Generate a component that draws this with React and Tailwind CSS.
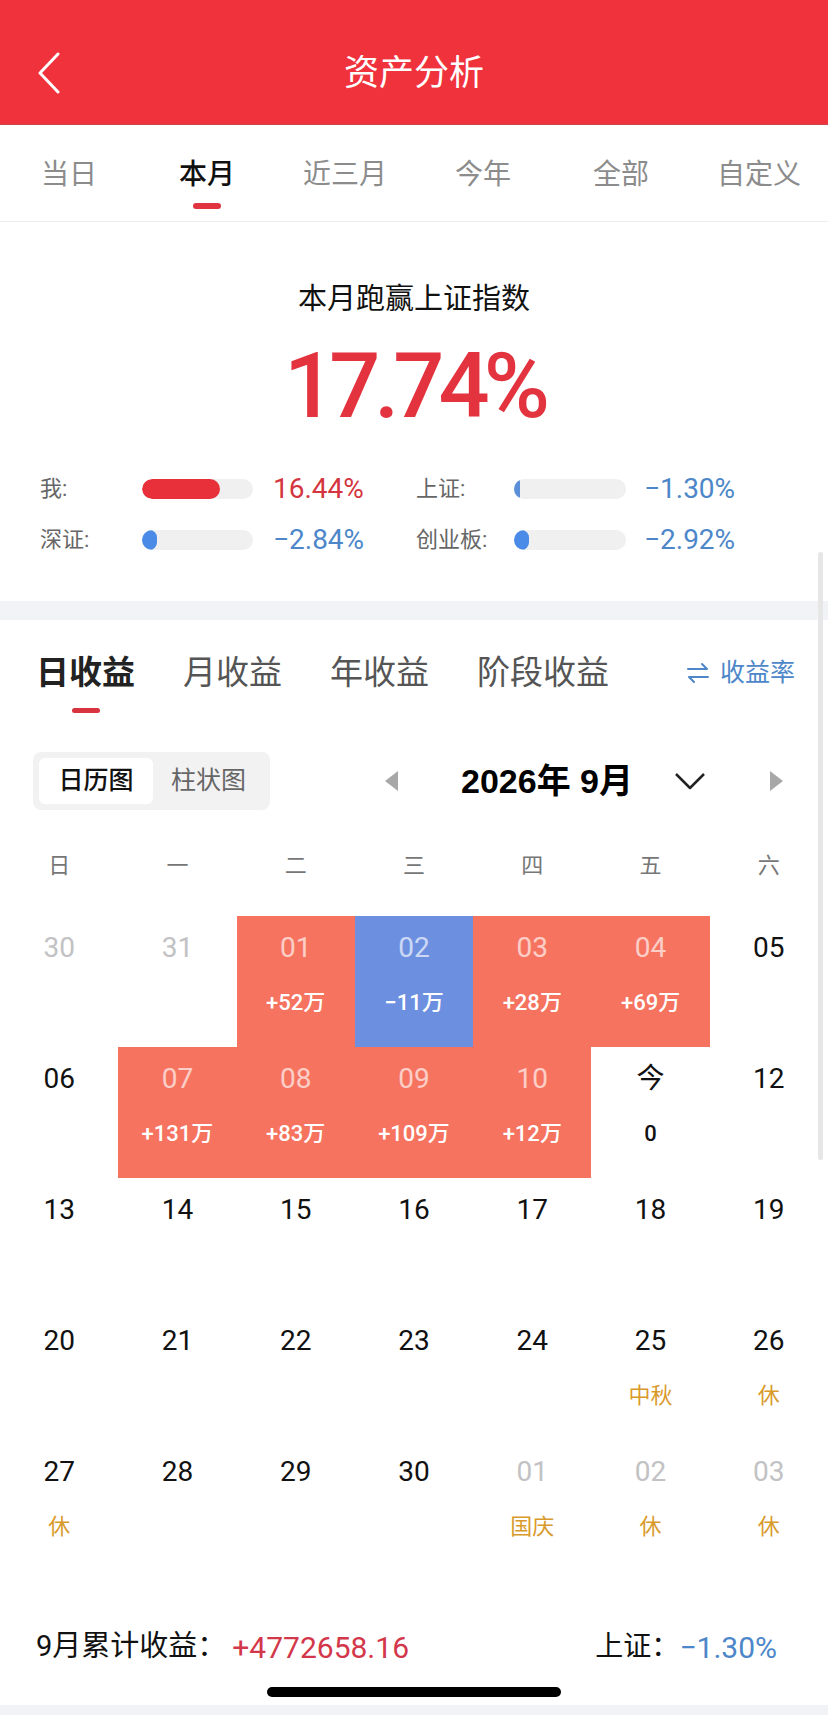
import React from 'react';

const periodTabs = ['当日', '本月', '近三月', '今年', '全部', '自定义'];
const incomeTabs = ['日收益', '月收益', '年收益', '阶段收益'];
const weekDays = ['日', '一', '二', '三', '四', '五', '六'];

const stats = [
  [
    { label: '我:', fill: 'w-[78px] bg-[#e8303a]', value: '16.44%', color: 'text-[#d5353f]' },
    { label: '上证:', fill: 'w-[6px] bg-[#5b8fd8]', value: '−1.30%', color: 'text-[#4d87c9]' },
  ],
  [
    { label: '深证:', fill: 'w-[15px] bg-[#4a8be8]', value: '−2.84%', color: 'text-[#4d87c9]' },
    { label: '创业板:', fill: 'w-[15px] bg-[#4a8be8]', value: '−2.92%', color: 'text-[#4d87c9]' },
  ],
];

const weeks = [
  [
    { d: '30', muted: true },
    { d: '31', muted: true },
    { d: '01', v: '+52万', kind: 'up' },
    { d: '02', v: '−11万', kind: 'down' },
    { d: '03', v: '+28万', kind: 'up' },
    { d: '04', v: '+69万', kind: 'up' },
    { d: '05' },
  ],
  [
    { d: '06' },
    { d: '07', v: '+131万', kind: 'up' },
    { d: '08', v: '+83万', kind: 'up' },
    { d: '09', v: '+109万', kind: 'up' },
    { d: '10', v: '+12万', kind: 'up' },
    { d: '今', v: '0' },
    { d: '12' },
  ],
  [{ d: '13' }, { d: '14' }, { d: '15' }, { d: '16' }, { d: '17' }, { d: '18' }, { d: '19' }],
  [
    { d: '20' },
    { d: '21' },
    { d: '22' },
    { d: '23' },
    { d: '24' },
    { d: '25', note: '中秋' },
    { d: '26', note: '休' },
  ],
  [
    { d: '27', note: '休' },
    { d: '28' },
    { d: '29' },
    { d: '30' },
    { d: '01', muted: true, note: '国庆' },
    { d: '02', muted: true, note: '休' },
    { d: '03', muted: true, note: '休' },
  ],
];

const StatItem = ({ item, labelW, barW, gap }) => (
  <div className="flex items-center">
    <div className={`${labelW} text-[22px] leading-[36px] text-[#666]`}>{item.label}</div>
    <div className={`${barW} h-[20px] rounded-full bg-[#f0f0f0] overflow-hidden`}>
      <div className={`h-full rounded-full ${item.fill}`} />
    </div>
    <div className={`${gap} text-[28px] leading-[36px] ${item.color}`}>{item.value}</div>
  </div>
);

const DayCell = ({ day }) => {
  let bg = '';
  let numColor = day.muted ? 'text-[#c2c2c4]' : 'text-[#111]';
  let subColor = 'text-[#111]';
  if (day.kind === 'up') {
    bg = 'bg-[#f5735f]';
    numColor = 'text-white/65';
    subColor = 'text-white';
  }
  if (day.kind === 'down') {
    bg = 'bg-[#6c8fe0]';
    numColor = 'text-white/65';
    subColor = 'text-white';
  }
  return (
    <div className={`h-[131px] flex flex-col items-center ${bg}`}>
      <div className={`pt-[14px] text-[28px] leading-[36px] ${numColor}`}>{day.d}</div>
      {day.v && (
        <div className={`mt-[23px] text-[22px] leading-[28px] font-medium ${subColor}`}>{day.v}</div>
      )}
      {day.note && (
        <div className="mt-[23px] text-[22px] leading-[28px] text-[#d99a2c]">{day.note}</div>
      )}
    </div>
  );
};

const App = () => {
  return (
    <div className="relative w-[828px] h-[1716px] bg-white overflow-hidden font-['Roboto','Noto_Sans_CJK_SC',sans-serif]">
      {/* header */}
      <div className="h-[124px] bg-[#f0323d] shadow-[0_1px_0_#c9474c] relative flex items-center justify-center pt-[16px]">
        <svg className="absolute left-[36px] top-[52px]" width="26" height="42" viewBox="0 0 26 42">
          <polyline points="22,2 4,21 22,40" fill="none" stroke="#fff" strokeWidth="3" strokeLinecap="round" strokeLinejoin="round" />
        </svg>
        <div className="text-[35px] text-white font-['Noto_Sans_CJK_SC',sans-serif]">资产分析</div>
      </div>

      {/* period tabs */}
      <div className="h-[98px] grid grid-cols-6 border-b border-[#ededed]">
        {periodTabs.map((t, i) => (
          <div key={t} className="flex flex-col items-center pt-[34px]">
            <div className={`text-[28px] leading-[34px] ${i === 1 ? 'text-[#111] font-medium' : 'text-[#8c8c8c]'}`}>{t}</div>
            {i === 1 && <div className="mt-[11px] w-[28px] h-[6px] rounded-full bg-[#e0343f]" />}
          </div>
        ))}
      </div>

      {/* summary */}
      <div className="h-[379px] flex flex-col">
        <div className="pt-[60px] text-center text-[29px] leading-[34px] text-[#111]">本月跑赢上证指数</div>
        <div className="mt-[21px] text-center text-[90px] leading-[100px] font-medium tracking-[-6px] text-[#e2333e]">17.74%</div>
        <div className="mt-[34px] px-[40px] flex flex-col gap-[15px]">
          {stats.map((row, i) => (
            <div key={i} className="flex">
              <div className="w-[376px]">
                <StatItem item={row[0]} labelW="w-[102px]" barW="w-[111px]" gap="ml-[20px]" />
              </div>
              <StatItem item={row[1]} labelW="w-[98px]" barW="w-[112px]" gap="ml-[18px]" />
            </div>
          ))}
        </div>
      </div>

      <div className="h-[19px] bg-[#f2f3f7]" />

      {/* income tabs */}
      <div className="flex items-start pl-[36px] pr-[33px] pt-[33px]">
        <div className="flex gap-[48px]">
          {incomeTabs.map((t, i) => (
            <div key={t} className="flex flex-col items-center">
              <div className={`text-[33px] leading-[40px] ${i === 0 ? 'text-[#222] font-bold' : 'text-[#555]'}`}>{t}</div>
              {i === 0 && <div className="mt-[15px] w-[28px] h-[5px] rounded-full bg-[#d93340]" />}
            </div>
          ))}
        </div>
        <div className="ml-auto flex items-center h-[40px] gap-[10px] text-[25px] text-[#4d87c9]">
          <svg width="24" height="22" viewBox="0 0 24 22">
            <path d="M2 7 H21 L16 2 M22 15 H3 L8 20" fill="none" stroke="#4d87c9" strokeWidth="2" strokeLinecap="round" strokeLinejoin="round" />
          </svg>
          <span>收益率</span>
        </div>
      </div>

      {/* toggle + month nav */}
      <div className="mt-[39px] flex items-center">
        <div className="ml-[33px] w-[237px] h-[58px] rounded-[8px] bg-[#f2f2f2] p-[6px] flex items-center">
          <div className="w-[114px] h-full rounded-[6px] bg-white flex items-center justify-center text-[25px] font-medium text-[#111]">日历图</div>
          <div className="flex-1 flex items-center justify-center text-[25px] text-[#666]">柱状图</div>
        </div>
        <svg className="ml-[113px]" width="16" height="22" viewBox="0 0 16 22">
          <polygon points="15,1 15,21 2,11" fill="#a8a8a8" />
        </svg>
        <div className="ml-[62px] text-[34px] font-bold text-black font-['Liberation_Sans','Noto_Sans_CJK_SC',sans-serif]">2026年 9月</div>
        <svg className="ml-[40px]" width="34" height="20" viewBox="0 0 34 20">
          <polyline points="3,3 17,17 31,3" fill="none" stroke="#222" strokeWidth="2.5" strokeLinejoin="round" />
        </svg>
        <svg className="ml-[62px]" width="16" height="22" viewBox="0 0 16 22">
          <polygon points="1,1 1,21 14,11" fill="#a8a8a8" />
        </svg>
      </div>

      {/* calendar */}
      <div className="mt-[36px] grid grid-cols-7">
        {weekDays.map((w) => (
          <div key={w} className="text-center text-[22px] leading-[40px] text-[#777]">{w}</div>
        ))}
      </div>
      <div className="mt-[30px] grid grid-cols-7">
        {weeks.flat().map((day, i) => (
          <DayCell key={i} day={day} />
        ))}
      </div>

      {/* footer */}
      <div className="mt-[56px] flex items-center justify-between pl-[36px] pr-[51px] h-[40px]">
        <div className="flex items-center">
          <span className="text-[29px] text-[#111]">9月累计收益：</span>
          <span className="ml-[6px] text-[30px] text-[#d3374a]">+4772658.16</span>
        </div>
        <div className="flex items-center">
          <span className="text-[28px] text-[#111]">上证：</span>
          <span className="text-[30px] text-[#4d87c9]">−1.30%</span>
        </div>
      </div>
      <div className="mt-[20px] mx-auto w-[294px] h-[10px] rounded-full bg-black" />
      <div className="mt-[8px] h-[10px] bg-[#f2f3f7]" />

      {/* scroll indicator */}
      <div className="absolute left-[818px] top-[552px] w-[5px] h-[608px] rounded-full bg-[#e6e6e6]" />
    </div>
  );
};

export default App;
